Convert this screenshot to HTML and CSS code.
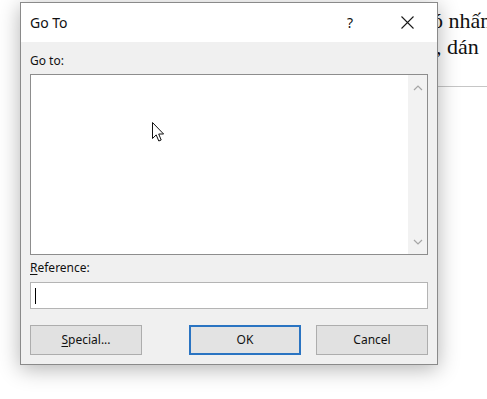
FILE: index.html
```html
<!DOCTYPE html>
<html lang="vi">
<head>
<meta charset="utf-8">
<title>Go To</title>
<link rel="stylesheet" href="styles.css">
</head>
<body>
<div class="doc">
  <div class="doc-line l1">đó nhấn</div>
  <div class="doc-line l2">p, dán</div>
  <div class="doc-rule"></div>
</div>

<div class="dialog">
  <div class="titlebar">
    <span class="title">Go To</span>
    <span class="help">?</span>
    <span class="close">
      <svg width="13" height="13" viewBox="0 0 13 13"><path d="M0.5 0.5 L12.5 12.5 M12.5 0.5 L0.5 12.5" stroke="#1a1a1a" stroke-width="1.1" fill="none"/></svg>
    </span>
  </div>
  <div class="body">
    <div class="label first">Go to:</div>
    <div class="listbox">
      <div class="list-area"></div>
      <div class="scrollbar">
        <svg width="10" height="6" viewBox="0 0 10 6"><path d="M1 5 L5 1 L9 5" stroke="#a6a6a6" stroke-width="1.2" fill="none"/></svg>
        <svg width="10" height="6" viewBox="0 0 10 6"><path d="M1 1 L5 5 L9 1" stroke="#a6a6a6" stroke-width="1.2" fill="none"/></svg>
      </div>
    </div>
    <div class="label second"><u>R</u>eference:</div>
    <div class="input"><span class="caret"></span></div>
    <div class="buttons">
      <button class="btn"><u>S</u>pecial...</button>
      <div class="btn-group">
        <button class="btn default">OK</button>
        <button class="btn">Cancel</button>
      </div>
    </div>
  </div>
</div>

<svg class="pointer" width="14" height="22" viewBox="0 0 14 22">
  <path d="M0.5 0.5 L0.5 16.5 L4.2 12.9 L6.8 19 L9.2 18 L6.7 12 L11.6 12 Z" fill="#fff" stroke="#111" stroke-width="1" stroke-linejoin="miter"/>
</svg>
</body>
</html>
```
FILE: styles.css
```css
html, body {
  margin: 0;
  padding: 0;
  overflow: hidden;
  background: #ffffff;
}
body {
  width: 487px;
  height: 399px;
  position: relative;
  font-family: "Noto Sans", "Open Sans", sans-serif;
}
.doc {
  padding-top: 8px;
  font-family: "Liberation Serif", "Times New Roman", serif;
  font-size: 22px;
  line-height: 26px;
  color: #111;
  white-space: nowrap;
}
.l1 { padding-left: 421px; }
.l2 { padding-left: 425px; }
.doc-rule {
  margin-top: 26px;
  margin-left: 420px;
  border-top: 1px solid #c6c6c6;
}

.dialog {
  position: absolute;
  left: 20px;
  top: 2px;
  width: 416px;
  height: 361px;
  border: 1px solid #8a8a8a;
  background: #f0f0f0;
  box-shadow: 0 4px 20px rgba(0, 0, 0, 0.3);
  display: flex;
  flex-direction: column;
}
.titlebar {
  height: 39px;
  background: #ffffff;
  display: flex;
  align-items: center;
  padding-left: 9px;
  font-size: 14px;
  color: #111;
}
.title { flex: 1; padding-bottom: 1px; }
.help {
  width: 8px;
  margin-right: 46px;
  font-size: 14px;
  padding-bottom: 1px;
}
.close {
  width: 13px;
  height: 13px;
  margin-right: 23px;
  display: flex;
}
.body {
  padding: 0 9px;
  flex: 1;
  display: flex;
  flex-direction: column;
}
.label {
  font-size: 12px;
  line-height: 16px;
  color: #111;
}
.label.first { margin-top: 11px; margin-bottom: 5px; }
.label.second { margin-top: 5px; margin-bottom: 6px; }
.label u { text-decoration-thickness: 1px; text-underline-offset: 2px; }

.listbox {
  height: 179px;
  border: 1px solid #8d8d8d;
  background: #ffffff;
  display: flex;
}
.list-area { flex: 1; }
.scrollbar {
  width: 19px;
  background: #f2f2f2;
  display: flex;
  flex-direction: column;
  align-items: center;
  justify-content: space-between;
  padding: 10px 0 9px;
}
.input {
  height: 25px;
  border: 1px solid #b4b4b4;
  background: #ffffff;
  display: flex;
  align-items: center;
  padding-left: 4px;
}
.caret {
  width: 1px;
  height: 16px;
  background: #000;
}
.buttons {
  margin-top: 16px;
  display: flex;
}
.btn-group {
  margin-left: auto;
  display: flex;
  gap: 15px;
}
.btn {
  width: 112px;
  height: 30px;
  margin: 0;
  padding: 0 0 1px;
  border: 1px solid #adadad;
  background: #e1e1e1;
  font-family: "Noto Sans", "Open Sans", sans-serif;
  font-size: 12px;
  color: #111;
}
.btn u { text-decoration-thickness: 1px; text-underline-offset: 2px; }
.btn.default {
  border: 2px solid #2a74c2;
  background: #e3e3e3;
}
.pointer {
  position: absolute;
  left: 152px;
  top: 122px;
}
```
